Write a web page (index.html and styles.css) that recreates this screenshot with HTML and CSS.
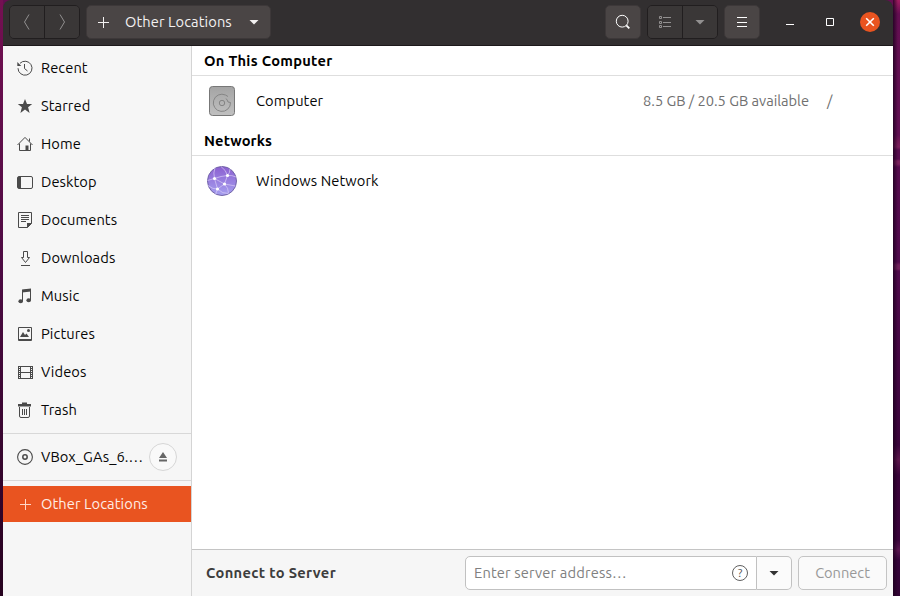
FILE: index.html
```
<!DOCTYPE html>
<html lang="en">
<head>
<meta charset="utf-8">
<title>Other Locations</title>
<link rel="stylesheet" href="styles.css">
</head>
<body>
<div class="edge edge-left"></div>
<div class="window">
  <header class="titlebar">
    <div class="group nav">
      <button class="btn flat"><svg width="16" height="16" viewBox="0 0 16 16"><path d="M10 0.500L5.500 8l4.500 7.500"/></svg></button>
      <button class="btn flat"><svg width="16" height="16" viewBox="0 0 16 16"><path d="M6 .500L10.500 8 6 15.500"/></svg></button>
    </div>
    <button class="btn path"><svg width="16" height="16" viewBox="0 0 16 16"><path d="M8.500 3v11M3 8.500h11"/></svg><span>Other Locations</span><i class="caret"></i></button>
    <div class="spacer"></div>
    <button class="btn square search"><svg width="16" height="16" viewBox="0 0 16 16"><circle cx="7.200" cy="7.200" r="5.900"/><path d="M11.300 11.300l3 3" stroke-width="1.800"/></svg></button>
    <div class="group view">
      <button class="btn flat"><svg width="16" height="16" viewBox="0 0 16 16"><path d="M2.500 2.500h2v2h-2zM2.500 7.500h2v2h-2zM2.500 11.500h2v2h-2zM6 3.500h8M6 8.500h8M6 12.500h8"/></svg></button>
      <button class="btn flat"><i class="caret"></i></button>
    </div>
    <button class="btn square"><svg width="16" height="16" viewBox="0 0 16 16"><path d="M3 3.500h10M3 8.500h10M3 12.500h10" /></svg></button>
    <div class="controls">
      <span class="ctl"><svg width="16" height="16" viewBox="0 0 16 16"><path d="M4 10.500h8"/></svg></span>
      <span class="ctl"><svg width="16" height="16" viewBox="0 0 16 16"><path d="M4.500 4.500h7v7h-7z"/></svg></span>
      <span class="ctl"><span class="close"><svg width="16" height="16" viewBox="0 0 16 16"><path d="M4.200 4.200l7.600 7.600M11.800 4.200l-7.600 7.600" stroke-width="1.600"/></svg></span></span>
    </div>
  </header>
  <div class="body">
    <nav class="sidebar">
      <a class="place"><svg width="16" height="16" viewBox="0 0 16 16"><path d="M3 3.300A7 7 0 1 1 1 8.200" /><path d="M7.500 4v4.500l3 2.500"/><path class="fill" d="M.300 2v4h4z"/></svg><span>Recent</span></a>
      <a class="place"><svg width="16" height="16" viewBox="0 0 16 16"><path class="fill" d="M8 1l2 5h5.200l-4.100 3.300L12.600 15 8 11.600 3.400 15l1.500-5.700L.800 6H6z"/></svg><span>Starred</span></a>
      <a class="place"><svg width="16" height="16" viewBox="0 0 16 16"><path d="M.500 9L8 1.400 15.500 9M2.500 7.500v7h11v-7M12.500 2.500v3"/><path class="fill" d="M8.500 9.500h3V14h-3z"/></svg><span>Home</span></a>
      <a class="place"><svg width="16" height="16" viewBox="0 0 16 16"><rect x=".500" y="2.500" width="15" height="12" rx="1.500"/><path class="fill" d="M1 3h3v11H1z"/></svg><span>Desktop</span></a>
      <a class="place"><svg width="16" height="16" viewBox="0 0 16 16"><path d="M1.500.500h13v11l-4 4h-9zM4 3.500h8M4 5.500h8M4 7.500h8M4 9.500h5"/><path class="fill" d="M10 11h5l-5 5z"/></svg><span>Documents</span></a>
      <a class="place"><svg width="16" height="16" viewBox="0 0 16 16"><path d="M6.500 1.500h4v6h2l-4 5-4-5h2zM4 15.500h9"/></svg><span>Downloads</span></a>
      <a class="place"><svg width="16" height="16" viewBox="0 0 16 16"><path d="M5.500 13V2.500l8-1V12"/><path class="fill" d="M5 1.500L14 .500v3l-9 1z"/><ellipse class="fill" cx="3.700" cy="13.300" rx="2.300" ry="2"/><ellipse class="fill" cx="11.700" cy="12.300" rx="2.300" ry="2"/></svg><span>Music</span></a>
      <a class="place"><svg width="16" height="16" viewBox="0 0 16 16"><path d="M1.500 1.500h13v13h-13zM1 13.500h14"/><path class="fill" d="M3 11l3-5 2 3 1.500-1.500L12 11z"/><circle class="fill" cx="11.500" cy="4.500" r="1.500"/></svg><span>Pictures</span></a>
      <a class="place"><svg width="16" height="16" viewBox="0 0 16 16"><path d="M3.500 2v13M13.500 2v13M3 2.500h11M3 8.500h11M3 14.500h11"/><path d="M2.500 2v13M14.500 2v13" stroke-dasharray="1 1"/><path d="M1.500 2v13M15.500 2v13"/></svg><span>Videos</span></a>
      <a class="place"><svg width="16" height="16" viewBox="0 0 16 16"><path d="M2.500 5v9q0 1.500 1.500 1.500h7q1.500 0 1.500-1.500V5M5.500 7v6M7.500 7v6M9.500 7v6"/><path class="fill" d="M1 2h4V.500h5V2h4v2.500H1z"/></svg><span>Trash</span></a>
      <hr class="line first">
      <a class="place disc"><svg width="16" height="16" viewBox="0 0 16 16"><circle cx="8" cy="8" r="7.400" stroke-width="1.100"/><circle cx="8" cy="8" r="2.200" stroke-width="1.500"/></svg><span>VBox_GAs_6.…</span><span class="eject"><svg width="10" height="10" viewBox="0 0 10 10"><path d="M5 0l4 6H1zM1 7.500h8v2H1z"/></svg></span></a>
      <hr class="line second">
      <a class="place active"><svg width="16" height="16" viewBox="0 0 16 16"><path d="M8.500 3v11M3 8.500h11"/></svg><span>Other Locations</span></a>
    </nav>
    <main class="content">
      <h2 class="heading wide">On This Computer</h2>
      <div class="row">
        <svg class="icon" width="32" height="32" viewBox="0 0 32 32">
          <defs><linearGradient id="disk" x2="0" y2="1"><stop stop-color="#a4a4a4"/><stop offset="1" stop-color="#c0c0c0"/></linearGradient></defs>
          <rect x="3.500" y="1.500" width="25" height="29" rx="3" fill="url(#disk)" stroke="#777"/>
          <path d="M19.500 10A8.600 8.600 0 1 0 24.500 17.500M19.500 10L22 11.500M24.500 17.500l-2.500-.500q-.500-2-2-3.500" fill="none" stroke="#858585"/>
          <circle cx="16" cy="18" r="2.700" fill="none" stroke="#858585"/>
        </svg>
        <span>Computer</span>
        <span class="space">8.5 GB / 20.5 GB available</span>
        <span class="mount">/</span>
      </div>
      <h2 class="heading">Networks</h2>
      <div class="row">
        <svg class="icon" width="32" height="32" viewBox="0 0 32 32">
          <defs><linearGradient id="globe" x2="0" y2="1"><stop stop-color="#8b5fd0"/><stop offset="1" stop-color="#a6a0f0"/></linearGradient></defs>
          <circle cx="16" cy="16" r="14.500" fill="url(#globe)" stroke="#7365a8"/>
          <path d="M9 2.500Q7 8 8.500 13.500L11.500 24 18.500 19 21.500 10.500Q20 5 15 1.500M8.500 13.500Q15 11 21.500 10.500Q26 10 30 12M1.500 15.500l7-2 10 5.500 11 2M2 20.500q5 4 9.500 3.500l-2 5.500M11.500 24q5 5 11 4.500M18.500 19q4 4 4 9M21.500 10.500Q24 8 24 4" fill="none" stroke="#d8ccf5" stroke-width=".700"/>
          <g fill="#fff"><circle cx="8.500" cy="13.500" r="1.600"/><circle cx="21.500" cy="10.500" r="1.600"/><circle cx="18.500" cy="19" r="1.600"/><circle cx="11.500" cy="24" r="1.600"/></g>
        </svg>
        <span>Windows Network</span>
      </div>
      <footer class="connect">
        <strong>Connect to Server</strong>
        <div class="entry"><span class="hint">Enter server address…</span><span class="help">?</span></div>
        <button class="drop"><i class="caret"></i></button>
        <button class="go">Connect</button>
      </footer>
    </main>
  </div>
</div>
<div class="edge edge-right"></div>
</body>
</html>
```
FILE: styles.css
```
* { box-sizing: border-box; }
body {
  margin: 0;
  width: 900px;
  height: 596px;
  display: flex;
  overflow: hidden;
  background: #40083d;
  font: 14.667px/20px Ubuntu, "Noto Sans", "Open Sans", sans-serif;
  letter-spacing: .09px;
  color: #060606;
}
button { font: inherit; letter-spacing: inherit; margin: 0; padding: 0; border: 0; }
svg { display: block; flex: none; }
span { white-space: nowrap; }
.edge { flex: none; }
.edge-left { width: 3px; background: linear-gradient(#741052, #4d0b43 45%, #26021f); }
.edge-right {
  width: 7px;
  background:
    linear-gradient(90deg, #1b001dcc, transparent 5px),
    linear-gradient(#a31c61 0, #640e51 14px, #610f53 135px, #6f1655 140px, #7c1f5c 147px, #580c4f 150px, #580c4f 159px, #7a215d 161px, #7a215d 164px, #560b4e 167px, #510a4d 262px, #71205c 265px, #71205c 269px, #500a4c 271px, #3b043c 445px, #5c164c 460px, #3a033a 475px, #3b043c 540px, #5a1550 550px, #35033a 560px, #310333);
}
.window { width: 890px; display: flex; flex-direction: column; background: #fff; }

.titlebar {
  height: 46px;
  flex: none;
  display: flex;
  align-items: flex-start;
  padding: 5px 3px 0 6px;
  background: #322f30;
  border-bottom: 1px solid #1d191b;
  border-radius: 8px 8px 0 0;
  color: #fff;
}
.window { background: linear-gradient(#640e51 10px, #fff 10px); }
.titlebar svg { fill: none; stroke: currentColor; }
.group { display: flex; border: 1px solid #211e1f; border-radius: 5px; overflow: hidden; }
.btn { height: 34px; display: flex; align-items: center; justify-content: center; color: #fff; background: #4a4545; }
.flat { height: 32px; width: 34px; background: #3a3737; color: #929090; }
.flat + .flat { width: 35px; border-left: 1px solid #211e1f; }
.nav { width: 71px; }
.path { width: 185px; margin-left: 6px; border: 1px solid #3d3839; border-radius: 5px; justify-content: flex-start; padding-left: 8px; color: #f3f1f1; }
.path span { margin-left: 14px; width: 107px; text-align: left; }
.path .caret { margin-left: 17px; }
.caret { width: 10px; height: 5px; background: currentColor; clip-path: polygon(0 0, 100% 0, 50% 100%); }
.spacer { flex: 1; }
.square { width: 36px; border: 1px solid #3d3839; border-radius: 5px; }
.view { margin: 0 6px; width: 71px; }
.controls { display: flex; height: 34px; margin-left: 10px; }
.ctl { width: 40px; display: flex; align-items: center; justify-content: center; }
.close { width: 20px; height: 20px; display: flex; align-items: center; justify-content: center; border-radius: 50%; background: #e95420; }

.body { flex: 1; display: flex; min-height: 0; }
.sidebar { width: 189px; flex: none; padding-top: 3px; background: #f6f6f6; border-right: 1px solid #d4d4d4; }
.place { height: 38px; display: flex; align-items: center; padding-left: 14px; }
.place > svg { margin-right: 8px; fill: none; stroke: #4a4a4a; }
.place svg .fill { fill: #4a4a4a; stroke: none; }
.line { border: 0; height: 1px; background: #d8d8d8; margin: 4px 0; }
.line.second { margin-bottom: 5px; }
.eject { width: 28px; height: 28px; margin-left: auto; margin-right: 14px; display: flex; align-items: center; justify-content: center; border: 1px solid #d6d6d6; border-radius: 50%; background: #f9f9f9; }
.eject svg { fill: #666; }
.active { height: 36px; background: #e95420; color: #ffede5; }
.active > svg { stroke: #ffd7c7; }

.content { flex: 1; display: flex; flex-direction: column; background: #fff; }
.heading { margin: 0; height: 30px; padding: 5px 12px; border-bottom: 1px solid #dedede; font-size: inherit; line-height: 20px; letter-spacing: .13px; color: #000; }
.heading.wide { letter-spacing: .28px; }
.row { height: 50px; display: flex; align-items: center; padding-left: 14px; }
.icon { margin-right: 18px; }
.space { margin-left: auto; letter-spacing: -.02px; color: #707070; }
.mount { width: 66px; margin-left: 18px; color: #707070; }
.connect { margin-top: auto; height: 47px; display: flex; align-items: center; padding: 0 6px 0 14px; background: #f6f6f6; border-top: 1px solid #c4c4c4; color: #3d3d3d; }
.connect strong { letter-spacing: .33px; }
.entry { width: 292px; height: 34px; margin-left: auto; padding: 0 8px; display: flex; align-items: center; justify-content: space-between; border: 1px solid #c1c1c1; border-radius: 5px 0 0 5px; background: #fff; color: #808080; }
.hint { letter-spacing: .16px; }
.help { width: 16px; height: 16px; border: 1px solid #606060; border-radius: 50%; font-size: 12px; line-height: 14px; letter-spacing: 0; text-align: center; color: #555; }
.drop { width: 35px; height: 34px; display: flex; align-items: center; justify-content: center; border: 1px solid #c1c1c1; border-left: 0; border-radius: 0 5px 5px 0; background: #fbfbfb; color: #333; }
.go { width: 89px; height: 34px; margin-left: 6px; border: 1px solid #c4c4c4; border-radius: 5px; background: #fafafa; color: #989898; letter-spacing: -.03px; }
```
